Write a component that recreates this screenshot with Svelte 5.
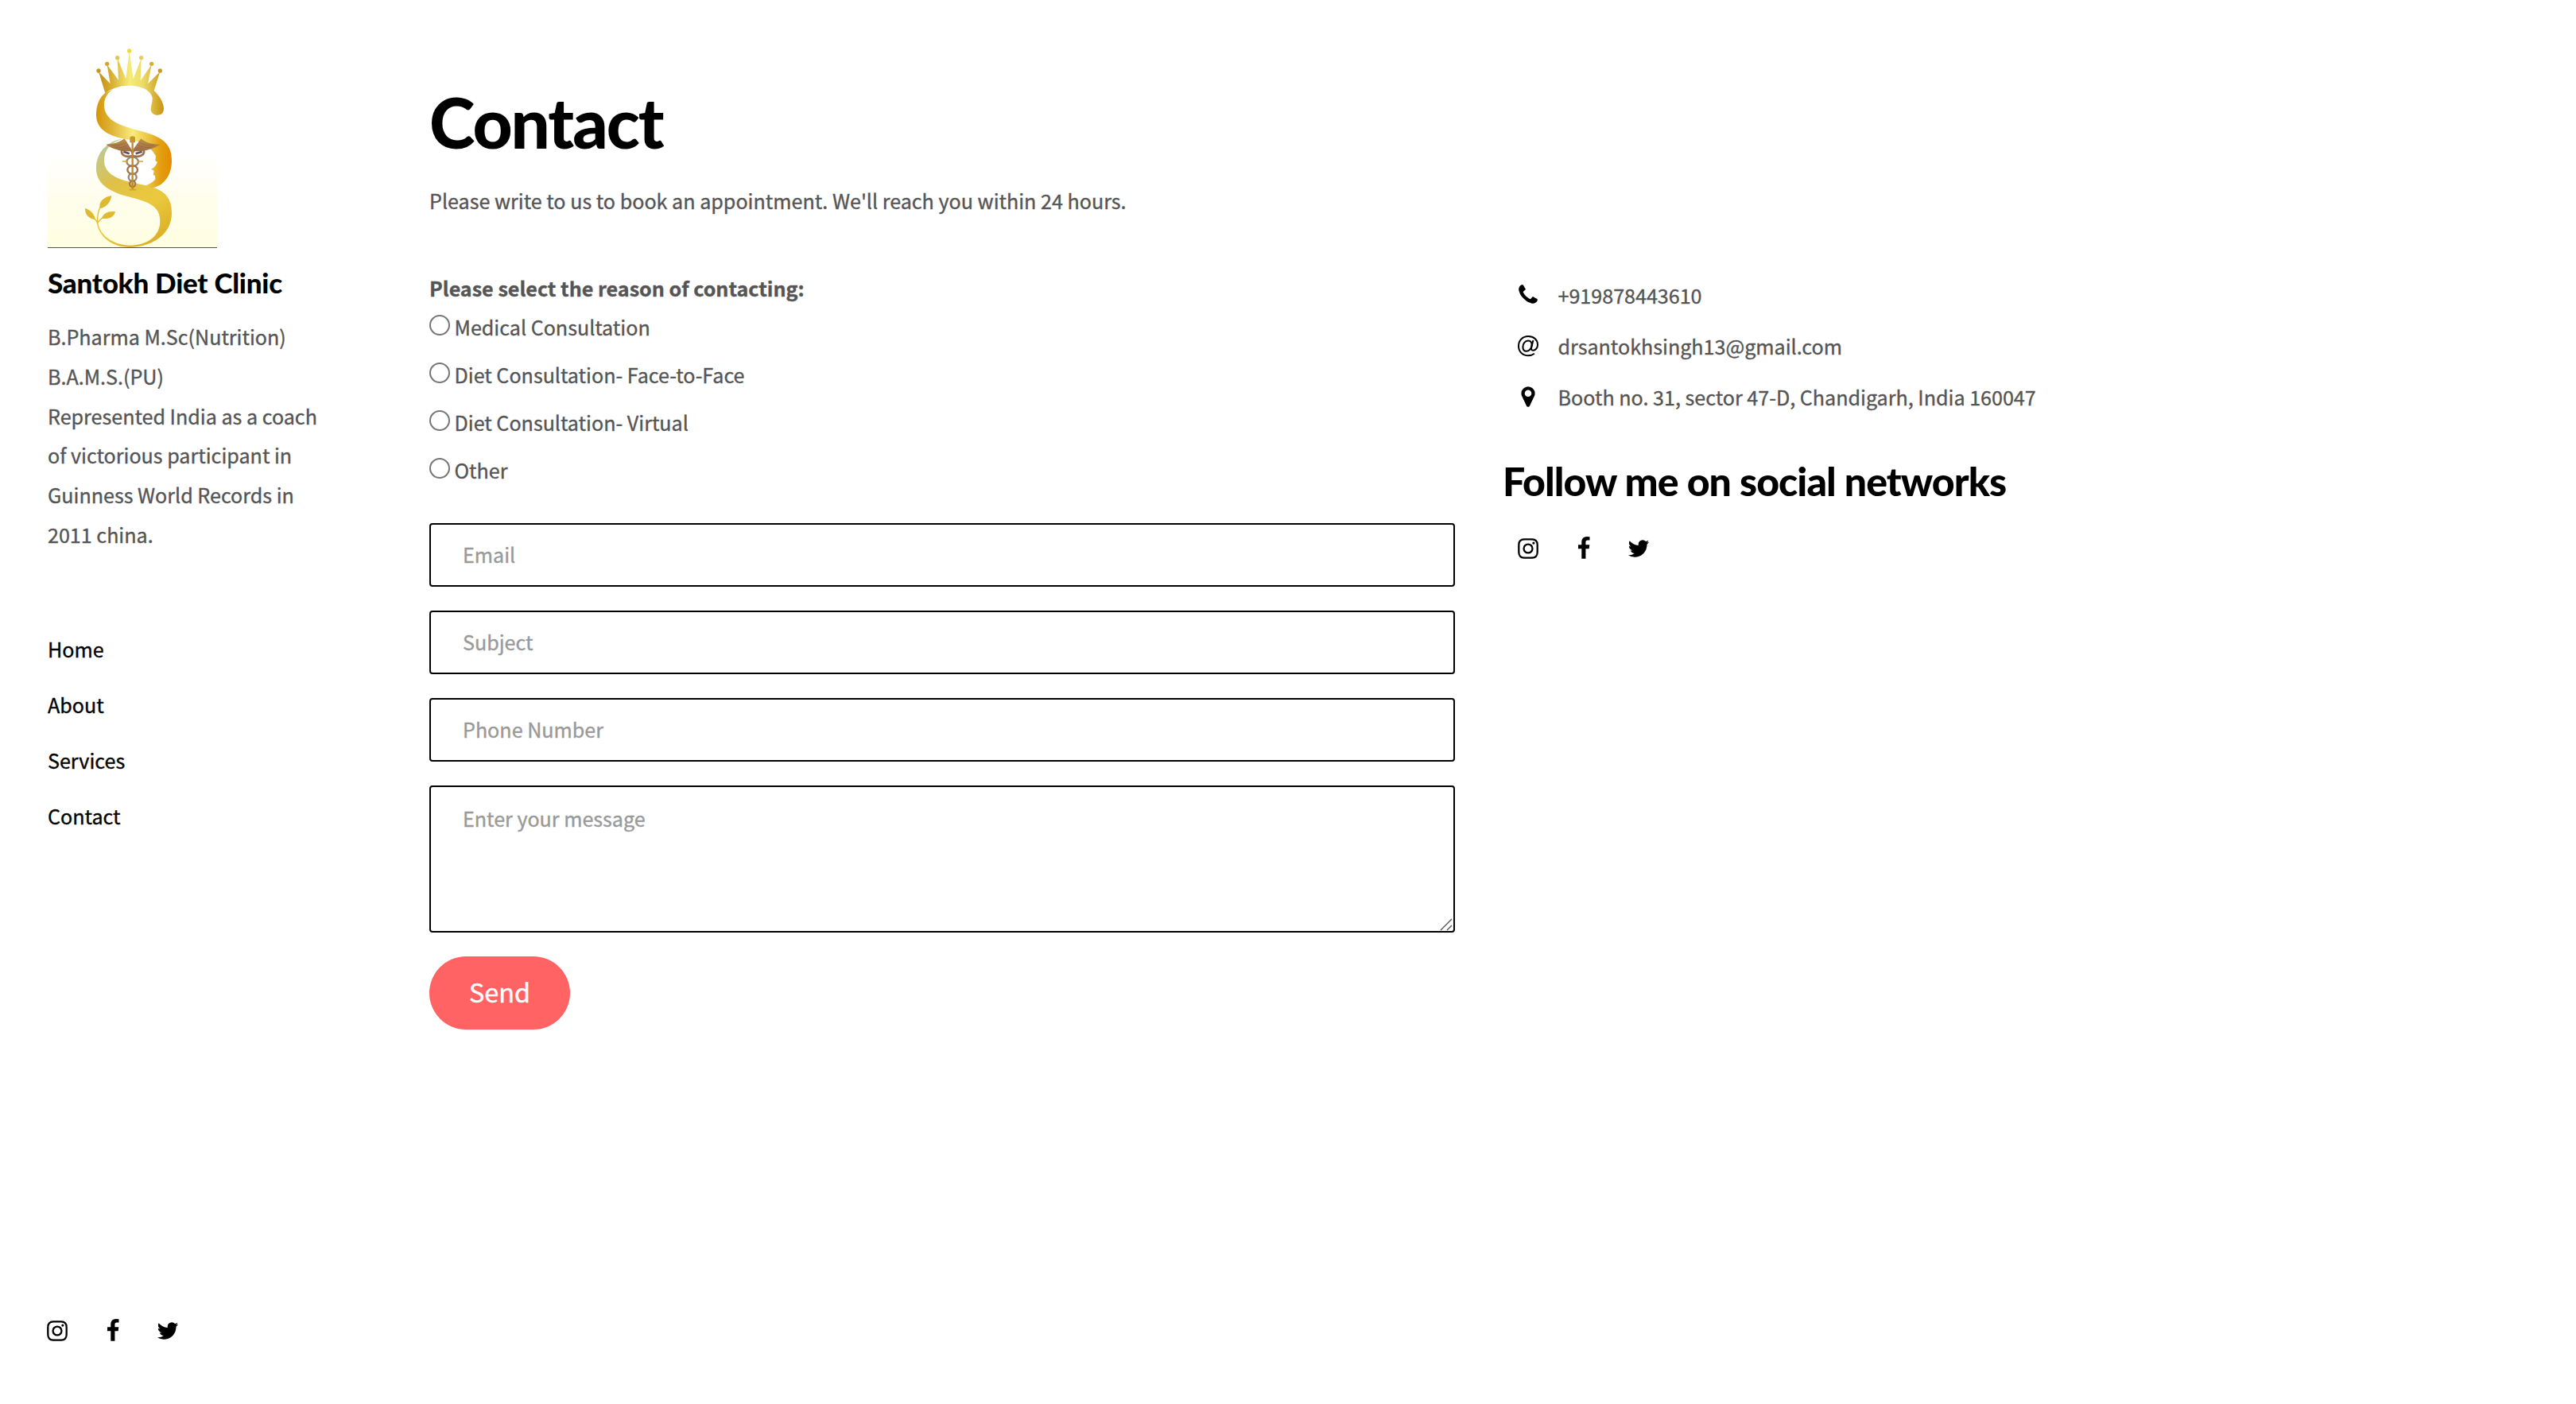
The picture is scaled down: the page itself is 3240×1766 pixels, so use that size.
<script>
  const bio = [
    'B.Pharma M.Sc(Nutrition)',
    'B.A.M.S.(PU)',
    'Represented India as a coach',
    'of victorious participant in',
    'Guinness World Records in',
    '2011 china.'
  ];
  const nav = ['Home', 'About', 'Services', 'Contact'];
  const reasons = ['Medical Consultation', 'Diet Consultation- Face-to-Face', 'Diet Consultation- Virtual', 'Other'];
  const fields = [
    { type: 'email', label: 'Email' },
    { type: 'text', label: 'Subject' },
    { type: 'tel', label: 'Phone Number' }
  ];
  const contacts = [
    { icon: 'phone', text: '+919878443610' },
    { icon: 'at', text: 'drsantokhsingh13@gmail.com' },
    { icon: 'pin', text: 'Booth no. 31, sector 47-D, Chandigarh, India 160047' }
  ];
  const networks = ['instagram', 'facebook', 'twitter'];

  const paths = {
    phone:
      'M1600 1240q0 27-10 70.5t-21 68.5q-21 50-122 106-94 51-186 51-27 0-53-3.5t-57.5-12.5-47-14.5-55.5-20.5-49-18q-98-35-175-83-127-79-264-216t-216-264q-48-77-83-175-3-9-18-49t-20.5-55.5-14.5-47-12.5-57.5-3.5-53q0-92 51-186 56-101 106-122 25-11 68.5-21t70.5-10q14 0 21 3 18 6 53 76 11 19 30 54t35 63.5 31 53.5q3 4 17.5 25t21.5 35.5 7 28.5q0 20-28.5 50t-62 55-62 53-28.5 46q0 9 5 22.5t8.5 20.5 14 24 11.5 19q76 137 174 235t235 174q2 1 19 11.5t24 14 20.5 8.5 22.5 5q18 0 46-28.5t53-62 55-62 50-28.5q14 0 28.5 7t35.5 21.5 25 17.5q25 15 53.5 31t63.5 35 54 30q70 35 76 53 3 7 3 21z',
    pin:
      'M1152 640q0-106-75-181t-181-75-181 75-75 181 75 181 181 75 181-75 75-181zm256 0q0 109-33 179l-364 774q-16 33-47.5 52t-67.5 19-67.5-19-46.5-52l-365-774q-33-70-33-179 0-212 150-362t362-150 362 150 150 362z',
    instagram:
      'M1152 896q0-106-75-181t-181-75-181 75-75 181 75 181 181 75 181-75 75-181zm138 0q0 164-115 279t-279 115-279-115-115-279 115-279 279-115 279 115 115 279zm108-410q0 38-27 65t-65 27-65-27-27-65 27-65 65-27 65 27 27 65zm-502-220q-7 0-76.5-.5t-105.5 0-96.5 3-103 10-71.5 18.5q-50 20-88 58t-58 88q-11 29-18.5 71.5t-10 103-3 96.5 0 105.5.5 76.5-.5 76.5 0 105.5 3 96.5 10 103 18.5 71.5q20 50 58 88t88 58q29 11 71.5 18.5t103 10 96.5 3 105.5 0 76.5-.5 76.5.5 105.5 0 96.5-3 103-10 71.5-18.5q50-20 88-58t58-88q11-29 18.5-71.5t10-103 3-96.5 0-105.5-.5-76.5.5-76.5 0-105.5-3-96.5-10-103-18.5-71.5q-20-50-58-88t-88-58q-29-11-71.5-18.5t-103-10-96.5-3-105.5 0-76.5.5zm768 630q0 229-5 317-10 208-124 322t-322 124q-88 5-317 5t-317-5q-208-10-322-124t-124-322q-5-88-5-317t5-317q10-208 124-322t322-124q88-5 317-5t317 5q208 10 322 124t124 322q5 88 5 317z',
    facebook:
      'M1343 12v264h-157q-86 0-116 36t-30 108v189h293l-39 296h-254v759h-306v-759h-255v-296h255v-218q0-186 104-288.5t277-102.5q147 0 228 12z',
    twitter:
      'M1684 408q-67 98-162 167 1 14 1 42 0 130-38 259.5t-115.5 248.5-184.5 210.5-258 146-323 54.5q-271 0-496-145 35 4 78 4 225 0 401-138-105-2-188-64.5t-114-159.5q33 5 61 5 43 0 85-11-112-23-185.5-111.5t-73.5-205.5v-4q68 38 146 41-66-44-105-115t-39-154q0-88 44-163 121 149 294.5 238.5t371.5 99.5q-8-38-8-74 0-134 94.5-228.5t228.5-94.5q140 0 236 102 109-21 205-78-37 115-142 178 93-10 186-50z'
  };

  // crown tips: [x, y, fill]
  const pearls = [
    [252, 147, '#c8961c'],
    [284, 121, '#d3a728'],
    [323, 98, '#e3c748'],
    [368, 72, '#ecdc42'],
    [413, 98, '#e6ce58'],
    [452, 121, '#d6ae34'],
    [484, 147, '#cb9a20']
  ];
</script>

{#snippet icon(name)}
  {#if name === 'at'}
    <svg class="icon" viewBox="0 0 30 30" aria-hidden="true">
      <g fill="none" stroke="#000" stroke-linecap="butt">
        <path stroke-width="2" d="M22.9 24.8C20.8 26.4 18.1 27.3 15.1 27.3 8 27.3 3 22.2 3 15.2 3 8.3 8.2 3.1 15.1 3.1 22.2 3.1 27 7.6 27 13.6 27 17.9 24.2 20.7 21.1 20.7 19.2 20.7 18.7 19.5 19.1 17.5L21.4 7.9" />
        <path stroke-width="2.1" d="M19.6 14.2C19.2 18 16.7 21.7 13 21.7 10.1 21.7 8.4 19.8 8.4 16.7 8.4 12.3 11.3 8.5 15 8.5 18.2 8.5 20 10.7 19.6 14.2Z" />
      </g>
    </svg>
  {:else}
    <svg class="icon" viewBox="0 0 1792 1792" aria-hidden="true"><path d={paths[name]} /></svg>
  {/if}
{/snippet}

{#snippet social()}
  <div class="social">
    {#each networks as n}
      <a href="#{n}" aria-label={n}>{@render icon(n)}</a>
    {/each}
  </div>
{/snippet}

<div class="page">
  <aside>
    <svg class="logo" viewBox="60 60 639 756" role="img" aria-label="Santokh Diet Clinic logo">
      <defs>
        <linearGradient id="glow" x1="0" y1="0" x2="0" y2="1">
          <stop offset="0" stop-color="#fff" />
          <stop offset=".55" stop-color="#fffeeb" />
          <stop offset="1" stop-color="#ffffe1" />
        </linearGradient>
        <linearGradient id="crown" x1="243" x2="498" y1="0" y2="0" gradientUnits="userSpaceOnUse">
          <stop offset="0" stop-color="#bd860c" />
          <stop offset=".25" stop-color="#dbb437" />
          <stop offset=".5" stop-color="#f6ec78" />
          <stop offset=".7" stop-color="#ecd968" />
          <stop offset="1" stop-color="#c99310" />
        </linearGradient>
        <linearGradient id="upper" x1="243" x2="528" y1="0" y2="0" gradientUnits="userSpaceOnUse">
          <stop offset="0" stop-color="#d49506" />
          <stop offset=".2" stop-color="#dfb437" />
          <stop offset=".48" stop-color="#f8ea7c" />
          <stop offset=".68" stop-color="#ecc745" />
          <stop offset=".85" stop-color="#e39f10" />
          <stop offset="1" stop-color="#e38c00" />
        </linearGradient>
        <linearGradient id="lower" x1="250" x2="500" y1="410" y2="800" gradientUnits="userSpaceOnUse">
          <stop offset="0" stop-color="#b4cba0" />
          <stop offset=".16" stop-color="#c9c77b" />
          <stop offset=".36" stop-color="#e0c047" />
          <stop offset=".65" stop-color="#ebc93e" />
          <stop offset="1" stop-color="#d9ac22" />
        </linearGradient>
        <linearGradient id="wing" x1="0" x2="0" y1="400" y2="470" gradientUnits="userSpaceOnUse">
          <stop offset="0" stop-color="#c09046" />
          <stop offset="1" stop-color="#946345" />
        </linearGradient>
      </defs>
      <rect x="60" y="450" width="639" height="363" fill="url(#glow)" />
      <path fill="#fff" d="M340 405C290 420 258 455 262 510 268 570 310 590 400 600L465 570 480 470 430 420Z" />
      <path fill="url(#lower)" d="M340 404C290 412 243 450 243 515 243 572 290 600 350 618 430 640 484 650 484 715 484 768 440 806 370 806 310 806 255 770 250 718L245 718C252 778 310 814 370 813 460 812 528 760 528 685 528 615 490 595 440 582 380 566 273 560 273 485 273 442 300 418 340 404Z" />
      <path fill="url(#crown)" d="M277 231 252 150 296 196 284 124 327 182 323 100 355 177 368 74 383 177 413 100 410 184 452 124 438 196 484 150 461 222C480 240 497 265 498 288 498 305 490 314 475 314 460 314 450 306 449 293 449 278 456 265 455 250 451 224 420 203 365 203 325 204 300 215 277 231Z" />
      <path fill="url(#upper)" d="M277 230C253 250 243 280 243 315 244 365 285 392 350 404 400 412 440 420 462 460L468 468 466 486 474 492 467 505 460 513 450 518 461 524 458 540 465 543 466 556C460 565 445 575 430 580L450 590C500 582 528 540 528 485 528 430 500 402 440 383 370 360 273 350 273 275 274 240 295 218 330 207Z" />
      {#each pearls as [x, y, fill]}
        <circle cx={x} cy={y} r="8" {fill} />
      {/each}
      <g fill="#dfb92f">
        <path d="M301 618C265 625 252 645 257 667 280 662 297 645 301 618Z" />
        <path d="M201 666C200 690 215 705 240 709 235 685 220 672 201 666Z" />
        <path d="M315 679C290 675 270 685 263 704 285 708 310 703 315 679Z" />
      </g>
      <path fill="none" stroke="#e2bd36" stroke-width="4" d="M258 662C248 680 247 700 247 722M238 706 248 720 266 702" />
      <g>
        <path fill="url(#wing)" d="M375 442 350 403C330 416 310 424 280 425 292 433 305 440 320 444 334 450 350 452 375 450ZM384 442 412 403C430 418 455 426 485 425 470 433 458 440 442 444 426 450 408 452 384 450Z" />
        <path fill="none" stroke="#6f4a35" stroke-width="1.5" opacity=".6" d="M300 428C325 430 345 424 358 416M312 436C335 438 350 434 364 426M462 428C435 430 418 424 404 416M450 436C426 438 412 434 398 426" />
        <g fill="none" stroke="#a06f4b">
          <path stroke-width="8" d="M380 468C350 476 335 462 340 446 350 432 375 440 380 458 385 440 412 432 422 446 428 462 410 476 380 468Z" />
          <path stroke="#5f5358" stroke-width="8" d="M346 452 368 460M392 460 416 452" />
          <ellipse cx="380" cy="490" rx="22" ry="17" stroke="#98866f" stroke-width="7" />
          <ellipse cx="380" cy="521" rx="19" ry="16" stroke-width="7" />
          <ellipse cx="380" cy="549" rx="15" ry="14" stroke="#98866f" stroke-width="7" />
          <ellipse cx="380" cy="574" rx="11" ry="11" stroke-width="6" />
        </g>
        <path stroke="#bd8c28" stroke-width="7" d="M380 402V596" />
        <path stroke="#d6a42b" stroke-width="5" d="M342 489H362M398 489H420M368 596H394" />
        <path fill="#c7952e" d="M370 398Q380 390 390 398V418H370Z" />
      </g>
      <rect x="60" y="813" width="639" height="3" fill="#6c4d3d" />
    </svg>
    <h2 class="brand">Santokh Diet Clinic</h2>
    <p class="bio">
      {#each bio as line}<span>{line}</span>{/each}
    </p>
    <nav>
      {#each nav as item}<a href="#{item}">{item}</a>{/each}
    </nav>
    <div class="foot">{@render social()}</div>
  </aside>

  <main>
    <h1>Contact</h1>
    <p class="lead">Please write to us to book an appointment. We'll reach you within 24 hours.</p>
    <div class="columns">
      <form>
        <strong>Please select the reason of contacting:</strong>
        <div class="reasons">
          {#each reasons as r}
            <label><input type="radio" name="reason" value={r} /><span>{r}</span></label>
          {/each}
        </div>
        <div class="fields">
          {#each fields as f}
            <input class="field" type={f.type} placeholder={f.label} />
          {/each}
          <div class="message">
            <textarea class="field" placeholder="Enter your message"></textarea>
            <svg class="grip" viewBox="0 0 16 16" aria-hidden="true"><path d="M1 15 15 1M9 15l6-6" /></svg>
          </div>
          <button type="button">Send</button>
        </div>
      </form>
      <section>
        <ul>
          {#each contacts as c}
            <li>{@render icon(c.icon)}<span>{c.text}</span></li>
          {/each}
        </ul>
        <h2 class="follow">Follow me on social networks</h2>
        <div class="links">{@render social()}</div>
      </section>
    </div>
  </main>
</div>

<style>
  :global(body) {
    background: #fff;
  }
  .page {
    box-sizing: border-box;
    display: flex;
    height: 1766px;
    font: 400 25.1px/50px 'Noto Sans CJK SC', 'Open Sans', sans-serif;
    color: #555;
    -webkit-text-stroke: 0.35px currentColor;
  }
  .page :is(h1, h2, p, ul) {
    margin: 0;
    padding: 0;
  }
  a {
    color: #000;
    text-decoration: none;
  }
  h1,
  h2 {
    font-family: Lato, sans-serif;
    font-weight: 900;
    color: #000;
    white-space: nowrap;
    -webkit-text-stroke: 0;
  }
  aside {
    box-sizing: border-box;
    width: 480px;
    padding: 60px 0 77px 60px;
    display: flex;
    flex-direction: column;
    flex-shrink: 0;
  }
  .logo {
    width: 213px;
    height: 252px;
    display: block;
    flex-shrink: 0;
  }
  .page .brand {
    margin-top: 22px;
    font-size: 35px;
    line-height: 42px;
    letter-spacing: -0.25px;
  }
  .page .bio {
    margin-top: 23px;
    line-height: 49.8px;
  }
  .bio span {
    display: block;
    white-space: nowrap;
  }
  nav {
    margin-top: 93px;
    display: flex;
    flex-direction: column;
    gap: 20px;
  }
  .foot {
    margin-top: auto;
    margin-left: -3px;
  }
  .social {
    display: flex;
    gap: 39.5px;
  }
  .social a {
    display: block;
    height: 30px;
  }
  .icon {
    display: block;
    width: 30px;
    height: 30px;
    flex-shrink: 0;
    fill: #000;
  }
  main {
    padding: 104px 0 0 60px;
  }
  h1 {
    font-size: 87px;
    line-height: 100px;
    letter-spacing: -2px;
  }
  .page .lead {
    margin-top: 23px;
  }
  .columns {
    margin-top: 60px;
    display: grid;
    grid-template-columns: 1290px 1290px;
    gap: 60px;
  }
  strong {
    display: block;
    padding-top: 1px;
    margin-bottom: -1px;
    font-weight: 700;
    line-height: 49px;
  }
  .reasons {
    display: flex;
    flex-direction: column;
    gap: 10px;
  }
  label {
    display: flex;
    align-items: center;
    gap: 5.5px;
  }
  input[type='radio'] {
    appearance: none;
    box-sizing: border-box;
    width: 26px;
    height: 26px;
    margin: 0 0 4px;
    border: 2px solid #767676;
    border-radius: 50%;
    background: #fff;
  }
  .fields {
    margin-top: 42px;
    display: flex;
    flex-direction: column;
    align-items: flex-start;
    gap: 30px;
  }
  .field {
    box-sizing: border-box;
    display: block;
    width: 100%;
    height: 80px;
    margin: 0;
    padding: 0 40px 2px;
    border: 2px solid #000;
    border-radius: 4px;
    background: #fff;
    font: inherit;
    color: #555;
    outline: none;
  }
  .field::placeholder {
    color: #999;
    opacity: 1;
    -webkit-text-stroke: 0.35px #999;
  }
  .message {
    position: relative;
    width: 100%;
  }
  textarea.field {
    height: 185px;
    padding-top: 14px;
    resize: none;
    overflow: hidden;
  }
  .grip {
    position: absolute;
    right: 3px;
    bottom: 2px;
    width: 16px;
    height: 16px;
    fill: none;
    stroke: #555;
    stroke-width: 1.4;
  }
  button {
    width: 177px;
    height: 92px;
    padding: 0 0 4px;
    border: 0;
    border-radius: 46px;
    background: #ff6363;
    color: #fff;
    font: inherit;
    font-size: 32.4px;
    -webkit-text-stroke: 0.4px #fff;
  }
  section {
    padding-top: 2px;
  }
  ul {
    list-style: none;
  }
  li {
    display: flex;
    align-items: center;
    gap: 22.5px;
    height: 64px;
    padding-left: 17px;
  }
  .page .follow {
    margin-top: 43.5px;
    font-size: 50px;
    line-height: 60px;
    letter-spacing: -0.93px;
  }
  .links {
    padding: 40px 0 0 17px;
  }
</style>
